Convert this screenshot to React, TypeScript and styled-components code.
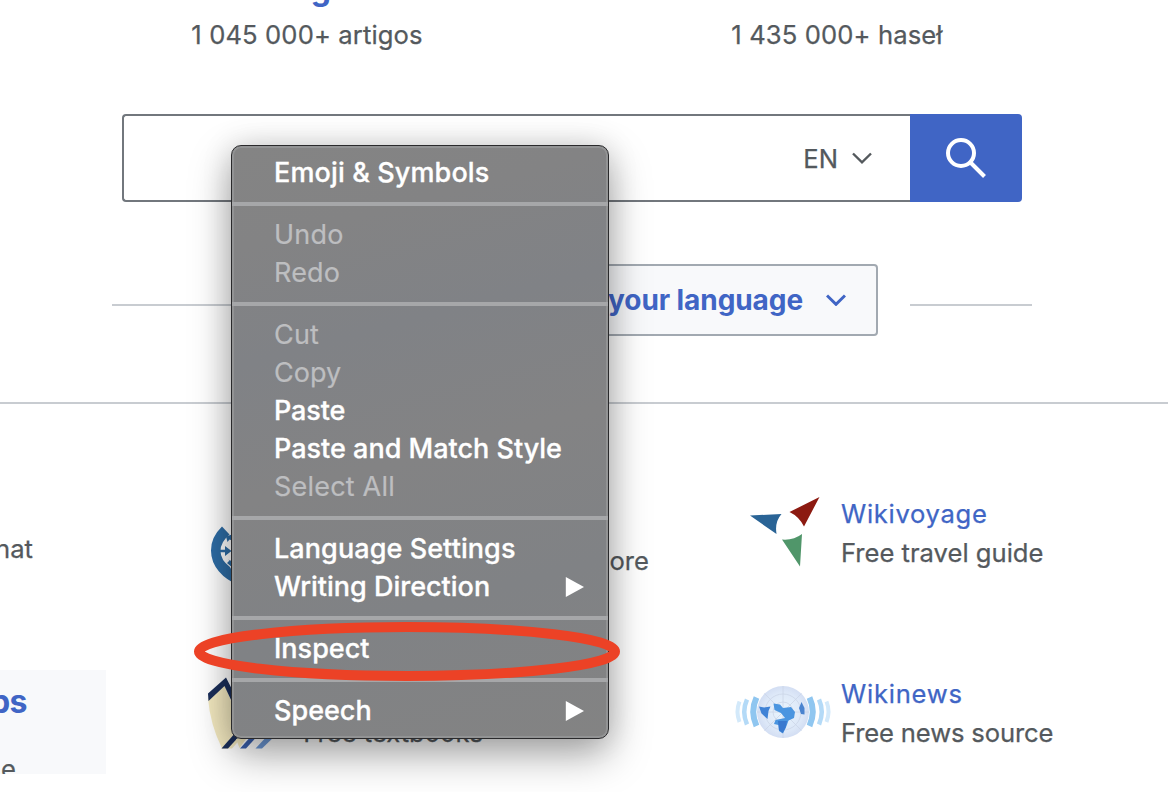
import React from "react";
import styled, { createGlobalStyle } from "styled-components";

const Global = createGlobalStyle`
  * { box-sizing: border-box; }
  body { margin: 0; background: #fff; font-family: Inter, "Liberation Sans", sans-serif; }
`;

const Page = styled.div`
  position: relative;
  width: 1168px;
  height: 792px;
  overflow: hidden;
  background: #fff;
  color: #54595d;
`;

const Text = styled.span<{ $ls?: number; $top?: number }>`
  display: block;
  white-space: nowrap;
  margin-top: ${(p) => p.$top ?? 0}px;
  font-size: 25.6px;
  line-height: 38px;
  letter-spacing: ${(p) => p.$ls ?? 0}px;
  -webkit-text-stroke: 0.25px currentColor;
`;

const Title = styled(Text)`
  color: #4065c5;
  line-height: 37px;
  margin-bottom: 2px;
`;

const Languages = styled.div`
  display: grid;
  grid-template-columns: 530px 530px;
  margin-left: 42px;
  height: 114px;
`;

const Language = styled.div`
  display: flex;
  flex-direction: column;
  align-items: center;
`;

const LanguageName = styled.strong`
  color: #4065c5;
  font-size: 32px;
  line-height: 38px;
  margin-top: -30px;
  margin-bottom: 8px;
  letter-spacing: -0.9px;
`;

const SearchForm = styled.div`
  display: flex;
  width: 900px;
  height: 88px;
  margin-left: 122px;
`;

const SearchInput = styled.div`
  flex: 1;
  display: flex;
  align-items: center;
  justify-content: flex-end;
  gap: 14px;
  padding-right: 38px;
  border: 2px solid #72777d;
  border-right: 0;
  border-radius: 4px 0 0 4px;
`;

const SearchButton = styled.div`
  width: 112px;
  display: flex;
  align-items: center;
  justify-content: center;
  background: #4065c5;
  border-radius: 0 4px 4px 0;
`;

const LanguageBar = styled.div`
  display: flex;
  align-items: center;
  justify-content: space-between;
  width: 920px;
  height: 72px;
  margin: 62px 0 0 112px;
`;

const Rule = styled.div`
  width: 122px;
  height: 2px;
  margin-top: 10px;
  background: #c8ccd1;
`;

const LanguageButton = styled.div`
  display: flex;
  align-items: center;
  justify-content: flex-end;
  gap: 23px;
  width: 612px;
  height: 72px;
  padding-right: 30px;
  border: 2px solid #a2a9b1;
  border-radius: 4px;
  background: #f8f9fb;
  color: #4065c5;
`;

const ButtonLabel = styled.strong`
  white-space: nowrap;
  font-size: 28px;
  letter-spacing: -0.08px;
`;

const Divider = styled.div`
  height: 2px;
  margin-top: 66px;
  background: #c8ccd1;
`;

const Footer = styled.div`
  display: grid;
  grid-template-columns: 208px 527px 1fr;
`;

const Column = styled.div`
  display: flex;
  flex-direction: column;
`;

const Clipped = styled.div<{ $width: number }>`
  display: flex;
  flex-direction: column;
  align-items: flex-end;
  width: ${(p) => p.$width}px;
`;

const AppPanel = styled.div`
  width: 106px;
  height: 104px;
  margin-top: 102px;
  padding-top: 12px;
  overflow: hidden;
  background: #f8f9fb;
`;

const AppTitle = styled.strong`
  color: #4065c5;
  font-size: 32px;
  line-height: 40px;
  letter-spacing: -0.5px;
`;

const Project = styled.div<{ $top: number }>`
  display: flex;
  height: 78px;
  margin-top: ${(p) => p.$top}px;
`;

const IconBox = styled.div<{ $width: number }>`
  flex: none;
  width: ${(p) => p.$width}px;
  height: 78px;
  svg { display: block; overflow: visible; }
`;

const Description = styled.div<{ $width: number; $bottom?: number }>`
  display: flex;
  flex-direction: column;
  justify-content: flex-end;
  align-items: flex-end;
  width: ${(p) => p.$width}px;
  padding-bottom: ${(p) => p.$bottom ?? 0}px;
`;

const Menu = styled.div`
  position: absolute;
  left: 231px;
  top: 145px;
  width: 378px;
  height: 594px;
  padding: 6px 0;
  border: 1px solid #2a2a2c;
  border-radius: 10px;
  background: linear-gradient(165deg, #848484 0%, #838384 15%, #808286 32%, #838384 52%, #808285 74%, #838383 100%);
  box-shadow: inset 0 0 0 2px #929394, 0 16px 40px rgba(0, 0, 0, 0.34), 0 0 30px rgba(0, 0, 0, 0.13);
`;

const MenuItem = styled.div<{ $disabled?: boolean; $ls?: number }>`
  display: flex;
  align-items: center;
  justify-content: space-between;
  height: 38px;
  padding: 2px 24px 0 42px;
  font-size: 27px;
  font-weight: ${(p) => (p.$disabled ? 400 : 500)};
  letter-spacing: ${(p) => p.$ls ?? 0}px;
  color: ${(p) => (p.$disabled ? "#bdbec0" : "#fff")};
  -webkit-text-stroke: ${(p) => (p.$disabled ? 0.2 : 0.3)}px currentColor;
  white-space: nowrap;
  svg { margin-top: 2px; }
`;

const Separator = styled.div`
  height: 4px;
  margin: 12px 0 8px;
  background: #a6a7a9;
`;

const Highlight = styled.svg`
  position: absolute;
  left: 190px;
  top: 616px;
`;

const Chevron = ({ color, width = 2.4 }: { color: string; width?: number }) => (
  <svg width="20" height="12" viewBox="0 0 20 12" fill="none" stroke={color} strokeWidth={width}>
    <path d="M1 1.5 L10 10.3 L19 1.5" />
  </svg>
);

const Arrow = () => (
  <svg width="19" height="20" viewBox="0 0 19 20" fill="#fff">
    <path d="M0.8 0 L19 10 L0.8 20 Z" />
  </svg>
);

const CommonsIcon = () => (
  <svg width="80" height="78" viewBox="208 503 80 78">
    <path d="M222 526.5 L229.5 534.5 Q220.5 542 220.5 551 Q220.5 560 230 567 L240 586 Q226 580 219 571.5 Q211 562 211 550.5 Q211 537 222 526.5 Z" fill="#2e6da6" />
    <path d="M220 549.700 H225 V546 L231.500 551 L225 556 V552.300 H220 Z" fill="#2e6da6" />
    <path d="M226 536.500 L232 534.500 V540.500 L229.500 539.500 L227.500 542 Z" fill="#2e6da6" />
    <path d="M227 563 L229.500 560.500 L228 559.500 L234 562 V569 Z" fill="#2e6da6" />
  </svg>
);

const BooksIcon = () => (
  <svg width="80" height="78" viewBox="208 674 80 78">
    <path d="M208 698 L224.5 684 L244 735 L232 748.5 H222 Q210 724 208 698 Z" fill="#f3e9c0" />
    <path d="M208 693.5 L226 677.5 L240 705 L232 702 L224.5 686 L208.5 701 Z" fill="#1b2f5a" />
    <path d="M221.5 748.5 L236 732 H243 L228 748.5 Z" fill="#1b2f5a" />
    <path d="M236 739 H246 L239.5 748 Z" fill="#f3e9c0" />
    <path d="M240 748.5 L254 733 H260 L246 748.5 Z" fill="#3a60ae" />
    <path d="M255.5 748.5 L270 733 H278 L262 748.5 Z" fill="#6e9ad8" />
  </svg>
);

const VoyageIcon = () => (
  <svg width="95" height="78" viewBox="735 495 95 78">
    <path d="M750 515.5 L781.5 514 Q774.5 522 776.5 534 Z" fill="#2a6496" />
    <path d="M819.5 497 L804 526.5 Q799 516.5 789.5 512 Z" fill="#8c1a11" />
    <path d="M782 539.5 Q793.5 540.5 802 534 L800 566.5 Z" fill="#50966a" />
  </svg>
);

const NewsIcon = () => (
  <svg width="95" height="78" viewBox="735 675 95 78">
    <defs>
      <radialGradient id="globe">
        <stop offset="0" stopColor="#eaf5fd" />
        <stop offset="0.75" stopColor="#dde8f8" />
        <stop offset="1" stopColor="#d3def3" />
      </radialGradient>
    </defs>
    <g fill="none">
      <path d="M756.5 697.5 Q750 711.5 756.5 726" stroke="#8fc6f0" strokeWidth="6" />
      <path d="M809.5 697.5 Q816 711.5 809.5 726" stroke="#8fc6f0" strokeWidth="6" />
      <path d="M747 699.5 Q741.5 711.5 747 724.5" stroke="#b4daf7" strokeWidth="4.5" />
      <path d="M819 699.5 Q824.5 711.5 819 724.5" stroke="#b4daf7" strokeWidth="4.5" />
      <path d="M739.5 701.5 Q735.5 711.5 739.5 722" stroke="#d3e9fa" strokeWidth="4" />
      <path d="M826.5 701.5 Q830.5 711.5 826.5 722" stroke="#d3e9fa" strokeWidth="4" />
    </g>
    <circle cx="783" cy="712" r="26" fill="url(#globe)" />
    <g fill="none" stroke="#cbd5e7" strokeWidth="0.8">
      <circle cx="783" cy="712" r="18" />
      <circle cx="783" cy="712" r="10" />
      <path d="M783 686 V738 M757 712 H809 M764.5 693.5 L801.5 730.5 M801.5 693.5 L764.5 730.5" />
    </g>
    <path d="M759 706.5 L764 707.5 L770.5 706.5 L768.5 711 L767.5 719 L761.5 713.5 Z" fill="#3f82d6" />
    <path d="M773.5 703.5 L780 704.5 L783 708 L791 707 L795 712 L794 718 L788.5 720.5 L786.5 726 L783 733.5 L779 731 L778.5 725 L774 724 L775.5 720 L785 718 L781 713 L774.5 710 Z" fill="#4a95e0" />
    <path d="M778 721 L787 721 L785.5 728 L782.5 733 L779 730 Z" fill="#3979cf" />
    <path d="M801.5 702 L804.5 708 L804.5 714.5 L801 714 L799 708 Z" fill="#4a83cf" />
  </svg>
);

const items: Array<null | { label: string; off?: boolean; sub?: boolean; ls?: number }> = [
  { label: "Emoji & Symbols", ls: 0.13 },
  null,
  { label: "Undo", off: true, ls: 0.2 },
  { label: "Redo", off: true, ls: 0.2 },
  null,
  { label: "Cut", off: true, ls: 0.2 },
  { label: "Copy", off: true },
  { label: "Paste", ls: -0.1 },
  { label: "Paste and Match Style" },
  { label: "Select All", off: true, ls: 0.2 },
  null,
  { label: "Language Settings", ls: 0.08 },
  { label: "Writing Direction", sub: true },
  null,
  { label: "Inspect" },
  null,
  { label: "Speech", sub: true },
];

export default function App() {
  return (
    <>
      <Global />
      <Page>
        <Languages>
          <Language>
            <LanguageName>Português</LanguageName>
            <Text $ls={0.12}>1 045 000+ artigos</Text>
          </Language>
          <Language>
            <LanguageName>Polski</LanguageName>
            <Text $ls={0.12}>1 435 000+ haseł</Text>
          </Language>
        </Languages>
        <SearchForm>
          <SearchInput>
            <Text $top={2}>EN</Text>
            <Chevron color="#54595d" />
          </SearchInput>
          <SearchButton>
            <svg width="42" height="42" viewBox="0 0 42 42" fill="none" stroke="#fff" strokeWidth="4">
              <circle cx="16" cy="16" r="13" />
              <path d="M25.5 25.5 L39.5 39.5" />
            </svg>
          </SearchButton>
        </SearchForm>
        <LanguageBar>
          <Rule />
          <LanguageButton>
            <ButtonLabel>your language</ButtonLabel>
            <Chevron color="#4065c5" width={3} />
          </LanguageButton>
          <Rule />
        </LanguageBar>
        <Divider />
        <Footer>
          <Column>
            <Project $top={86}>
              <Clipped $width={33}>
                <Text $top={40}>that</Text>
              </Clipped>
            </Project>
            <AppPanel>
              <Clipped $width={27}>
                <AppTitle>apps</AppTitle>
              </Clipped>
              <Clipped $width={16}>
                <Text $top={28}>e</Text>
              </Clipped>
            </AppPanel>
          </Column>
          <Column>
            <Project $top={99}>
              <IconBox $width={95}>
                <CommonsIcon />
              </IconBox>
              <Description $width={346} $bottom={1}>
                <Text>ore</Text>
              </Description>
            </Project>
            <Project $top={93}>
              <IconBox $width={95}>
                <BooksIcon />
              </IconBox>
              <Description $width={180}>
                <Text>Free textbooks</Text>
              </Description>
            </Project>
          </Column>
          <Column>
            <Project $top={91}>
              <IconBox $width={106}>
                <VoyageIcon />
              </IconBox>
              <div>
                <Title $ls={0.7}>Wikivoyage</Title>
                <Text>Free travel guide</Text>
              </div>
            </Project>
            <Project $top={102}>
              <IconBox $width={106}>
                <NewsIcon />
              </IconBox>
              <div>
                <Title $ls={0.75}>Wikinews</Title>
                <Text $ls={-0.15}>Free news source</Text>
              </div>
            </Project>
          </Column>
        </Footer>
        <Menu>
          {items.map((it, i) =>
            it ? (
              <MenuItem key={i} $disabled={it.off} $ls={it.ls}>
                {it.label}
                {it.sub && <Arrow />}
              </MenuItem>
            ) : (
              <Separator key={i} />
            )
          )}
        </Menu>
        <Highlight width="434" height="70" viewBox="190 616 434 70" fill="none">
          <ellipse cx="407" cy="651.5" rx="208" ry="24.5" stroke="#ec4226" strokeWidth="10" />
        </Highlight>
      </Page>
    </>
  );
}
